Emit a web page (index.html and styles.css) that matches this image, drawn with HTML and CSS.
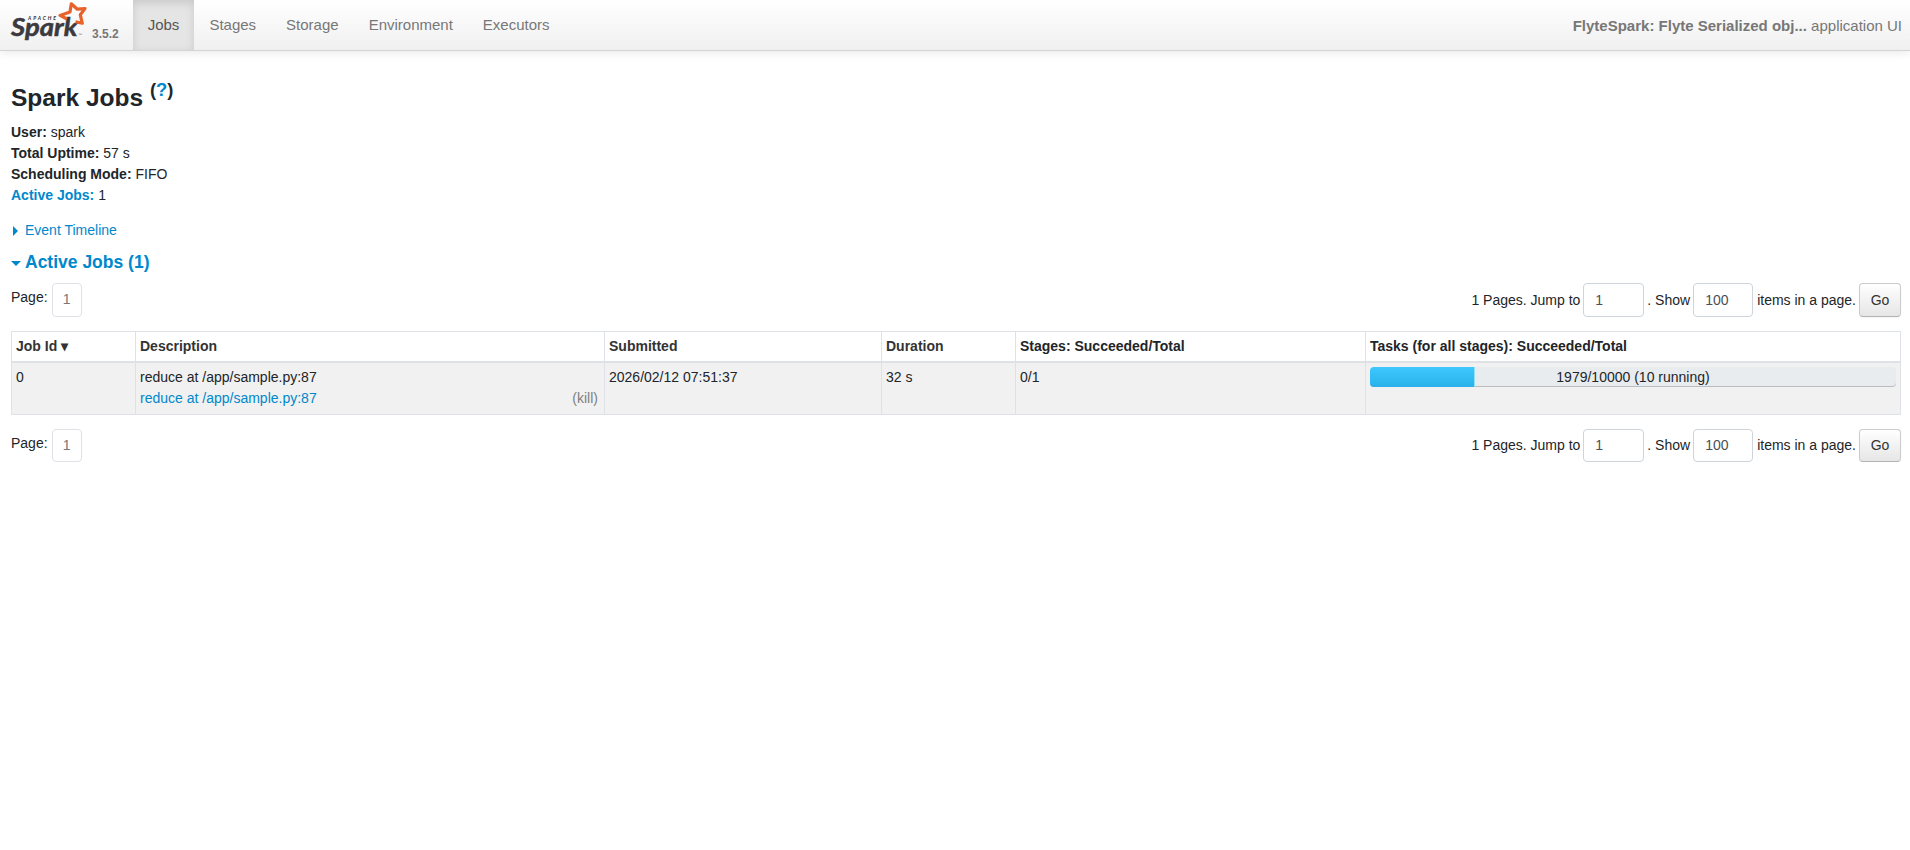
FILE: index.html
```
<!DOCTYPE html>
<html lang="en">
<head>
<meta charset="utf-8">
<title>Spark Jobs</title>
<link rel="stylesheet" href="styles.css">
</head>
<body>
<nav class="navbar">
  <a class="brand" href="#">
    <svg class="logo" width="82" height="44" viewBox="0 0 82 44" role="img" aria-label="Apache Spark">
      <text class="logo-apache" x="19" y="19.6" textLength="28">APACHE</text>
      <text class="logo-spark" x="2" y="36.3" textLength="66.5" lengthAdjust="spacingAndGlyphs">Spark</text>
      <text class="logo-tm" x="69" y="36">™</text>
      <path class="logo-star" d="M58 19 L51 15.4 L61 12 L62.3 3.8 L68.3 9.2 L76 8.6 L71.3 14.8 L73.3 23.3 L66.5 21.8"/>
    </svg>
    <span class="version">3.5.2</span>
  </a>
  <ul class="nav">
    <li class="active"><a href="#">Jobs</a></li>
    <li><a href="#">Stages</a></li>
    <li><a href="#">Storage</a></li>
    <li><a href="#">Environment</a></li>
    <li><a href="#">Executors</a></li>
  </ul>
  <div class="app-name"><strong>FlyteSpark: Flyte Serialized obj...</strong> application UI</div>
</nav>
<main class="container">
  <h3 class="title">Spark Jobs <sup>(<a href="#">?</a>)</sup></h3>
  <ul class="summary">
    <li><strong>User:</strong> spark</li>
    <li><strong>Total Uptime:</strong> 57 s</li>
    <li><strong>Scheduling Mode:</strong> FIFO</li>
    <li><a href="#"><strong>Active Jobs:</strong></a> 1</li>
  </ul>
  <a class="timeline" href="#"><span class="arrow arrow-closed"></span>Event Timeline</a>
  <h4 class="section"><a href="#"><span class="arrow arrow-open"></span>Active Jobs (1)</a></h4>
  <form class="pager">
    <span class="page-label">Page:</span><a class="page-link" href="#">1</a>
    <div class="jump"><label>1 Pages. Jump to</label><input class="field jump-page" value="1"><label>. Show</label><input class="field page-size" value="100"><label>items in a page.</label><button class="go" type="button">Go</button></div>
  </form>
  <table class="jobs">
    <colgroup><col class="c-id"><col class="c-desc"><col class="c-sub"><col class="c-dur"><col class="c-stages"><col class="c-tasks"></colgroup>
    <thead>
      <tr><th><span class="sort">Job Id ▾</span></th><th><span class="sort">Description</span></th><th><span class="sort">Submitted</span></th><th><span class="sort">Duration</span></th><th>Stages: Succeeded/Total</th><th>Tasks (for all stages): Succeeded/Total</th></tr>
    </thead>
    <tbody>
      <tr>
        <td>0</td>
        <td>reduce at /app/sample.py:87<div class="desc-row"><a href="#">reduce at /app/sample.py:87</a><a class="kill" href="#">(kill)</a></div></td>
        <td>2026/02/12 07:51:37</td>
        <td>32 s</td>
        <td>0/1</td>
        <td><div class="progress"><div class="bar" style="width:19.9%"></div><span class="progress-text">1979/10000 (10 running)</span></div></td>
      </tr>
    </tbody>
  </table>
  <form class="pager pager-bottom">
    <span class="page-label">Page:</span><a class="page-link" href="#">1</a>
    <div class="jump"><label>1 Pages. Jump to</label><input class="field jump-page" value="1"><label>. Show</label><input class="field page-size" value="100"><label>items in a page.</label><button class="go" type="button">Go</button></div>
  </form>
</main>
</body>
</html>
```
FILE: styles.css
```
* { box-sizing: border-box; }
body { margin: 0; font: 14px/21px "Liberation Sans", Arial, sans-serif; color: #212529; background: #fff; }
a { color: #08c; text-decoration: none; }
ul { list-style: none; margin: 0; padding: 0; }

.navbar { display: flex; height: 51px; border-bottom: 1px solid #d4d4d4; background: linear-gradient(#fff, #f0f0f0); box-shadow: 0 1px 10px rgba(0,0,0,.1); font-size: 15px; }
.brand { display: flex; width: 132.7px; padding-left: 9px; }
.version { margin: 24px 0 0 1px; font-size: 12px; font-weight: bold; color: #777; }
.logo { flex: none; }
.logo-apache { font: italic 900 5px Lato, sans-serif; fill: #3c3a3e; }
.logo-spark { font: italic bold 24.5px Lato, sans-serif; fill: #3c3a3e; stroke: #3c3a3e; stroke-width: .5; }
.logo-tm { font: 4px "Liberation Sans", sans-serif; fill: #777; }
.logo-star { fill: none; stroke: #e8622c; stroke-width: 3.2; stroke-linejoin: round; }
.nav { display: flex; }
.nav a { display: block; height: 50px; padding: 14px 15px 0; color: #777; }
.nav .active a { color: #555; background: #e5e5e5; box-shadow: inset 0 3px 8px rgba(0,0,0,.125); }
.app-name { margin: 15px 8px 0 auto; color: #777; }

.container { padding: 32px 9px 0 11px; }
.title { margin: 0; height: 39px; font-size: 24.5px; line-height: 30px; font-weight: bold; }
.title sup { position: relative; top: -10px; font-size: 18.4px; line-height: 0; vertical-align: baseline; }
.timeline { display: flex; align-items: center; margin-top: 14px; }
.section { margin: 8px 0 0; font-size: 17.5px; line-height: 26px; }
.section a { display: flex; align-items: center; }
.arrow { flex: none; }
.arrow-closed { margin: 0 7px 0 2px; border: 5.5px solid transparent; border-left: 5px solid #08c; border-right: 0; }
.arrow-open { margin: 3px 4px 0 0; border: 5px solid transparent; border-top-color: #08c; border-bottom: 0; }

.pager { display: flex; height: 34px; margin-top: 8px; }
.page-label { padding-top: 4px; }
.page-link { width: 30px; margin-left: 4px; padding-top: 5px; text-align: center; color: #777; border: 1px solid #dee2e6; border-radius: 4px; }
.jump { display: flex; align-items: center; margin-left: auto; }
.field { height: 34px; padding: 0 11px; margin: 0 4px; font: inherit; color: #495057; border: 1px solid #ced4da; border-radius: 4px; background: #fff; }
.jump-page { width: 61px; margin: 0 3px; }
.page-size { width: 60px; margin-left: 3px; }
.go { width: 42px; height: 34px; margin-left: 3px; padding: 0; font: inherit; color: #333; border: 1px solid #ccc; border-bottom-color: #b3b3b3; border-radius: 4px; background: linear-gradient(#fff, #e6e6e6); box-shadow: inset 0 1px 0 rgba(255,255,255,.2), 0 1px 2px rgba(0,0,0,.05); }

.jobs { width: 1890px; margin-top: 14px; table-layout: fixed; border-collapse: collapse; }
.jobs th, .jobs td { border: 1px solid #dee2e6; padding: 4px; text-align: left; vertical-align: top; }
.jobs th { height: 30px; padding-bottom: 3px; border-bottom-width: 2px; }
.jobs td { height: 53px; background: #f1f1f1; }
.sort { color: #333; }
.c-id { width: 124px; }
.c-desc { width: 469px; }
.c-sub { width: 277px; }
.c-dur { width: 134px; }
.c-stages { width: 350px; }
.desc-row { display: flex; justify-content: space-between; padding-right: 2px; }
.kill { color: gray; }
.progress { position: relative; height: 20px; overflow: hidden; background: #e9ecef; border-radius: 4px; box-shadow: inset 0 -1px 0 rgba(0,0,0,.2); }
.bar { height: 100%; border-right: 1px solid #8fe3f5; background: linear-gradient(#3ec8ff, #2ab1ea); }
.progress-text { position: absolute; inset: 0; text-align: center; }
.pager-bottom { margin-top: 14px; height: 33px; }
.pager-bottom .field, .pager-bottom .go { height: 33px; }
.pager-bottom .field { padding-bottom: 1px; }
```
